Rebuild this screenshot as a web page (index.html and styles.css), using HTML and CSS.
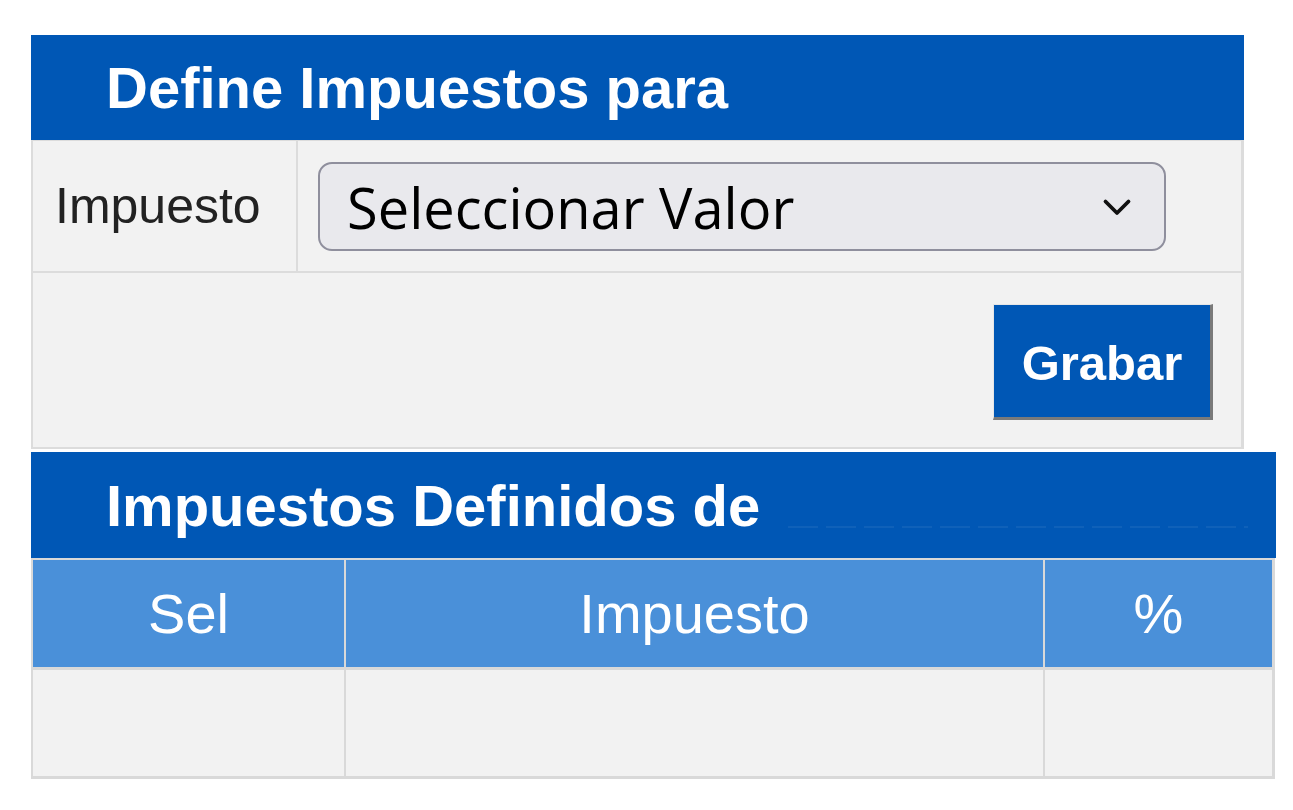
FILE: index.html
```html
<!DOCTYPE html>
<html lang="es">
<head>
<meta charset="utf-8">
<title>Define Impuestos</title>
<link rel="stylesheet" href="styles.css">
</head>
<body>
<div class="page">
  <section class="panel panel-form">
    <div class="panel-head">Define Impuestos para</div>
    <div class="form">
      <div class="form-row">
        <div class="label-cell">Impuesto</div>
        <div class="field-cell">
          <div class="select">
            <span class="select-text">Seleccionar Valor</span>
            <svg class="chevron" width="30" height="19" viewBox="0 0 30 19"><path d="M3.5 3.5 L15 15 L26.5 3.5" fill="none" stroke="#111" stroke-width="3.8" stroke-linecap="round" stroke-linejoin="round"/></svg>
          </div>
        </div>
      </div>
      <div class="form-row actions">
        <button class="btn">Grabar</button>
      </div>
    </div>
  </section>

  <section class="panel panel-list">
    <div class="panel-head">Impuestos Definidos de <span class="masked"></span></div>
    <div class="grid">
      <div class="th">Sel</div>
      <div class="th">Impuesto</div>
      <div class="th">%</div>
      <div class="td"></div>
      <div class="td"></div>
      <div class="td"></div>
    </div>
  </section>
</div>
</body>
</html>
```

FILE: styles.css
```css
* { box-sizing: border-box; }
html, body { margin: 0; padding: 0; background: #ffffff; }
body { font-family: "Liberation Sans", Arial, sans-serif; }

.page {
  padding: 35px 0 0 31px;
}

.panel-form { width: 1213px; }
.panel-list { width: 1245px; margin-top: 3px; }

.panel-head {
  background: #0057b5;
  color: #ffffff;
  font-weight: bold;
  font-size: 58px;
  height: 105px;
  line-height: 105px;
  padding-left: 75px;
  white-space: nowrap;
}
.panel-list .panel-head { height: 106px; line-height: 108px; }

.masked {
  display: inline-block;
  width: 460px;
  height: 2px;
  margin-left: 12px;
  vertical-align: -2px;
  background: repeating-linear-gradient(90deg, rgba(255,255,255,0.06) 0 30px, rgba(255,255,255,0) 30px 38px);
}

.form {
  background: #f2f2f2;
  border: 2px solid #dcdcdc;
  border-top-width: 1px;
  border-right-width: 3px;
}
.form-row {
  display: flex;
}
.form-row + .form-row { border-top: 2px solid #dcdcdc; }

.label-cell {
  width: 265px;
  height: 130px;
  border-right: 2px solid #dcdcdc;
  display: flex;
  align-items: center;
  padding-left: 22px;
  font-size: 50px;
  color: #222222;
}
.field-cell {
  flex: 1;
  display: flex;
  align-items: center;
  padding-left: 20px;
  padding-top: 1px;
}
.select {
  width: 848px;
  height: 89px;
  background: #e9e9ed;
  border: 2px solid #8f8f9d;
  border-radius: 14px;
  display: flex;
  align-items: center;
  justify-content: space-between;
  padding: 0 32px 0 27px;
  font-family: "Open Sans", "Liberation Sans", sans-serif;
  font-size: 56px;
  color: #000000;
}
.select-text { line-height: 1; }
.chevron { display: block; margin-top: 2px; }

.actions {
  height: 176px;
  justify-content: flex-end;
  align-items: flex-start;
  padding: 31px 28px 0 0;
}
.btn {
  width: 220px;
  height: 116px;
  background: #0057b5;
  color: #ffffff;
  font-family: "Liberation Sans", Arial, sans-serif;
  font-weight: bold;
  font-size: 49px;
  border-style: solid;
  border-width: 1px 3px 3px 1px;
  border-color: #e6e6e6 #7a7a7a #7a7a7a #e6e6e6;
  padding: 4px 0 0 0;
  cursor: pointer;
}

.grid {
  display: grid;
  grid-template-columns: 311px 697px 227px;
  grid-template-rows: 107px 106px;
  gap: 3px 2px;
  padding: 2px 3px 3px 2px;
  background: #d9d9d9;
  width: 1244px;
}
.th {
  background: #4a90d9;
  color: #ffffff;
  font-size: 56px;
  display: flex;
  align-items: center;
  justify-content: center;
}
.td { background: #f2f2f2; }
```
